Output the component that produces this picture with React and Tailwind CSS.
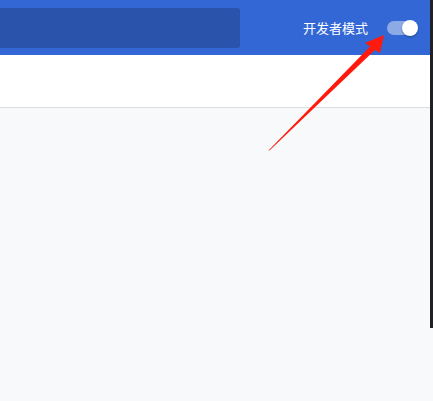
export default function App() {
  return (
    <div className="relative flex h-[401px] w-[433px] overflow-hidden bg-[#f8f9fa]" style={{ fontFamily: '"Noto Sans CJK SC", "Liberation Sans", sans-serif' }}>
      <div className="flex w-[430px] flex-col">
        <header className="flex h-[55px] items-center bg-[#3367d6]">
          <div className="h-[40px] w-[240px] rounded-r-[3px] bg-[#2a53ab]" />
          <div className="ml-auto flex items-center pr-[15px]">
            <span className="text-[13px] leading-none text-white">开发者模式</span>
            <div className="relative ml-[19px] h-[14px] w-[28px] rounded-full bg-[#8eaae6]">
              <div className="absolute right-[-3px] top-[-1px] h-[16px] w-[16px] rounded-full bg-white shadow-[0_1px_2px_rgba(0,0,0,0.35)]" />
            </div>
          </div>
        </header>
        <div className="h-[53px] border-b border-[#dadce0] bg-white" />
        <div className="flex-1" />
      </div>
      <div className="h-[328px] w-[3px] bg-[#202124]" />
      <svg className="pointer-events-none absolute left-0 top-0" width="433" height="401" viewBox="0 0 433 401">
        <polygon points="268.5,150.5 269.5,150.5 375.5,49.5 371.5,45" fill="#ff1a0d" />
        <polygon points="384,35 365,43 380,53" fill="#ff1a0d" />
      </svg>
    </div>
  );
}
